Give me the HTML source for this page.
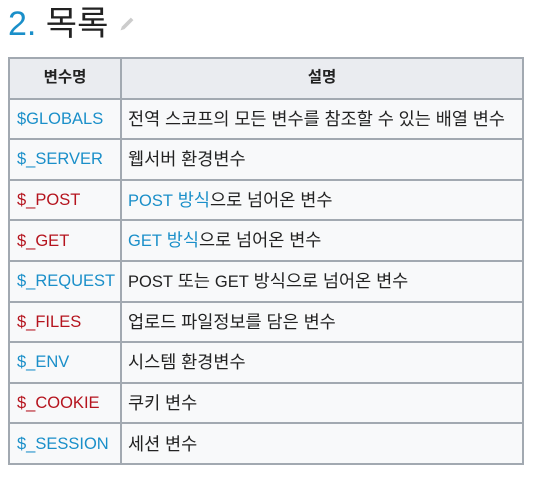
<!DOCTYPE html><html><head><meta charset="utf-8"><style>
body{margin:0;background:#fff;font-family:"Liberation Sans","Noto Sans CJK KR",sans-serif;}
h2{position:absolute;left:8px;top:3px;margin:0;font-weight:normal;font-size:34px;line-height:42px;color:#222;}
h2 .n{color:#1a8fc9;}
h2 .p{display:inline-block;width:18px;height:18px;margin-left:10px;vertical-align:2px;}
table{position:absolute;left:8px;top:57px;width:516px;border-collapse:collapse;font-size:17.5px;color:#222;table-layout:fixed;}
tr{height:40.6px;}
td,th{border:2px solid #a2a9b1;padding:0 6px;background:#f8f9fa;vertical-align:middle;line-height:20px;white-space:nowrap;}
td:first-child{font-size:16.5px;padding-left:7px;}
th{background:#eaecf0;font-weight:bold;font-size:15.5px;}
.c1{width:112px;}
.b{color:#1a8fc9}.r{color:#b5141e}
.l{font-size:16.5px}
</style></head><body>
<h2><span class="n">2.</span> 목록<svg class="p" viewBox="0 0 14 14"><path d="M2 12 L3 9 L10 2 L12 4 L5 11 Z" fill="#ccc"/></svg></h2>
<table>
<colgroup><col class="c1"><col></colgroup>
<tr><th>변수명</th><th>설명</th></tr>
<tr><td class="b">$GLOBALS</td><td>전역 스코프의 모든 변수를 참조할 수 있는 배열 변수</td></tr>
<tr><td class="b">$_SERVER</td><td>웹서버 환경변수</td></tr>
<tr><td class="r">$_POST</td><td><span class="b"><span class="l">POST</span> 방식</span>으로 넘어온 변수</td></tr>
<tr><td class="r">$_GET</td><td><span class="b"><span class="l">GET</span> 방식</span>으로 넘어온 변수</td></tr>
<tr><td class="b">$_REQUEST</td><td><span class="l">POST</span> 또는 <span class="l">GET</span> 방식으로 넘어온 변수</td></tr>
<tr><td class="r">$_FILES</td><td>업로드 파일정보를 담은 변수</td></tr>
<tr><td class="b">$_ENV</td><td>시스템 환경변수</td></tr>
<tr><td class="r">$_COOKIE</td><td>쿠키 변수</td></tr>
<tr><td class="b">$_SESSION</td><td>세션 변수</td></tr>
</table>
</body></html>
